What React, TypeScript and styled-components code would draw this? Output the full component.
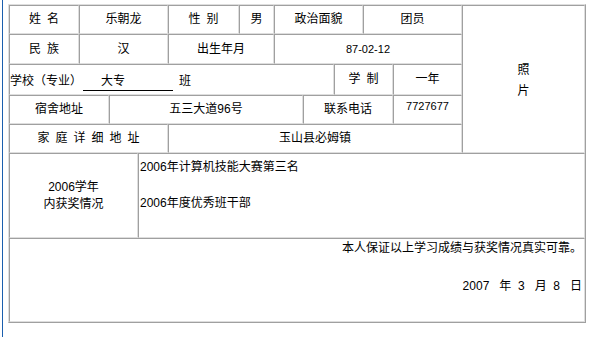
import styled, { createGlobalStyle } from "styled-components";

const GlobalStyle = createGlobalStyle`
  html, body {
    margin: 0;
    padding: 0;
    background: #fff;
  }
  body {
    font-family: "Liberation Sans", "Noto Sans CJK SC", sans-serif;
    font-size: 12px;
    color: #000;
  }
`

const dark = '#a0a0a0'
const light = '#dedede'

// style
const Page = styled.div`
  box-sizing: border-box;
  min-height: 100vh;
  margin-left: 2px;
  border-left: 1px solid #1b5fae;
  padding: 4px 0 0 5px;
`
const Sheet = styled.div`
  display: grid;
  width: 576px;
  grid-template-columns: 70px 30px 29px 30px 71px 35px 29px 31px 29px 30px 69px 123px;
  grid-template-rows: 29px 30px 31px 29px 29px 85px 84px;
  border: 1px solid;
  border-color: ${light} ${dark} ${dark} ${light};
`
const Cell = styled.div<{ $col: string; $row: string }>`
  grid-column: ${p => p.$col};
  grid-row: ${p => p.$row};
  box-sizing: border-box;
  min-width: 0;
  border: 1px solid;
  border-color: ${dark} ${light} ${light} ${dark};
  display: flex;
  flex-direction: column;
  align-items: center;
  justify-content: center;
  text-align: center;
  line-height: 17px;
  white-space: pre;
`
const Phone = styled(Cell)`
  justify-content: flex-start;
  padding-top: 4px;
  font-size: 11px;
  line-height: 13px;
`
const Birth = styled(Cell)`
  font-size: 11px;
`
const School = styled(Cell)`
  flex-direction: row;
  justify-content: flex-start;
  padding-top: 4px;
`
const Blank = styled.span`
  display: inline-block;
  box-sizing: border-box;
  width: 90px;
  padding-left: 18px;
  margin-left: 1px;
  border-bottom: 1px solid #000;
  text-align: left;
`
const Photo = styled(Cell)`
  line-height: 21px;
  padding-top: 3px;
`
const Awards = styled(Cell)`
  display: block;
  text-align: left;
  padding: 4px 0 0 1px;
  line-height: 18px;
`
const Statement = styled(Cell)`
  display: block;
  text-align: right;
  padding: 0 2px 0 0;
  line-height: 18px;
`
const Line = styled.p<{ $gap?: number }>`
  margin: ${p => p.$gap ?? 0}px 0 0;
`

const sp = '\u2002'
const nb = '\u00a0'

const rows: { col: string; row: string; text: string }[] = [
  { col: '1', row: '1', text: `姓${sp}名` },
  { col: '2 / 5', row: '1', text: '乐朝龙' },
  { col: '5', row: '1', text: `性${sp}别` },
  { col: '6', row: '1', text: '男' },
  { col: '7 / 10', row: '1', text: '政治面貌' },
  { col: '10 / 12', row: '1', text: '团员' },
  { col: '1', row: '2', text: `民${sp}族` },
  { col: '2 / 5', row: '2', text: '汉' },
  { col: '5 / 7', row: '2', text: '出生年月' },
  { col: '9 / 11', row: '3', text: `学${sp}制` },
  { col: '11', row: '3', text: '一年' },
  { col: '1 / 3', row: '4', text: '宿舍地址' },
  { col: '3 / 8', row: '4', text: '五三大道96号' },
  { col: '8 / 11', row: '4', text: '联系电话' },
  { col: '1 / 5', row: '5', text: ['家', '庭', '详', '细', '地', '址'].join(sp) },
  { col: '5 / 12', row: '5', text: '玉山县必姆镇' },
]

function App() {
  return (
    <Page>
      <GlobalStyle />
      <Sheet>
        {rows.map((c, i) =>
          <Cell key={i} $col={c.col} $row={c.row}>{c.text}</Cell>
        )}
        <Birth $col="7 / 12" $row="2">87-02-12</Birth>
        <School $col="1 / 9" $row="3">
          学校（专业）<Blank>大专</Blank>{sp}班
        </School>
        <Phone $col="11" $row="4">7727677</Phone>
        <Photo $col="12" $row="1 / 6">照{'\n'}片</Photo>
        <Cell $col="1 / 4" $row="6">{'2006学年\n内获奖情况'}</Cell>
        <Awards $col="4 / 13" $row="6">
          <Line>2006年计算机技能大赛第三名</Line>
          <Line $gap={18}>2006年度优秀班干部</Line>
        </Awards>
        <Statement $col="1 / 13" $row="7">
          <Line>本人保证以上学习成绩与获奖情况真实可靠。</Line>
          <Line $gap={20}>{`2007${nb}${nb}${nb}年${nb}${nb}3${nb}${nb}${nb}月${nb}${nb}8${nb}${nb}${nb}日`}</Line>
        </Statement>
      </Sheet>
    </Page>
  )
}

export default App
